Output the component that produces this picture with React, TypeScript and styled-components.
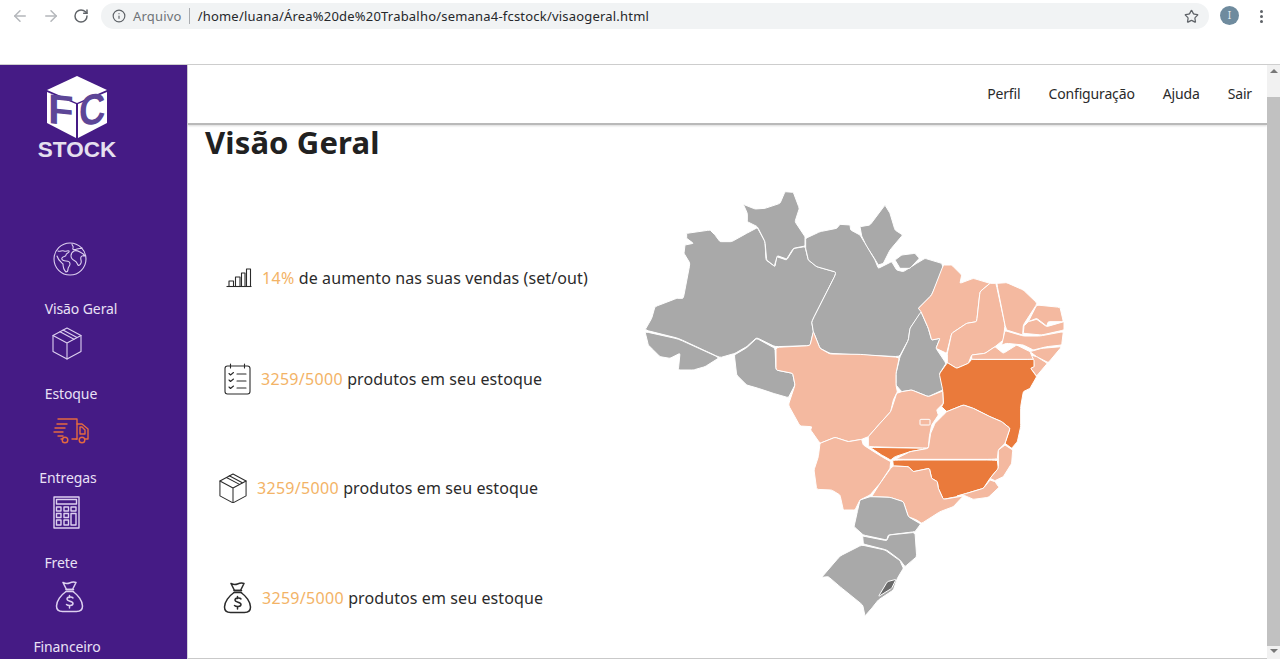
import React from 'react'
import styled, { createGlobalStyle } from 'styled-components'
import { ArrowLeft, ArrowRight, RotateCw, Info, Star } from 'lucide-react'

const GlobalStyle = createGlobalStyle`
  html, body {
    margin: 0;
    height: 659px;
    overflow: hidden;
    background: #fff;
    font-family: "Noto Sans", "Open Sans", sans-serif;
  }
`

const Page = styled.div`
  display: flex;
  flex-direction: column;
  height: 659px;
  overflow: hidden;
`

const BrowserBar = styled.header`
  box-sizing: border-box;
  flex: 0 0 65px;
  display: flex;
  align-items: flex-start;
  padding: 3px 0 0 11px;
  border-bottom: 1px solid #cfcfcf;
`

const NavIcon = styled.span<{ $faded?: boolean }>`
  display: flex;
  justify-content: center;
  align-items: center;
  width: 18px;
  height: 26px;
  margin-right: 12.5px;
  color: ${(p) => (p.$faded ? '#b4b7bb' : '#5f6368')};
`

const UrlPill = styled.div`
  flex: 0 0 1108px;
  box-sizing: border-box;
  height: 26px;
  margin-left: -1.5px;
  padding-left: 11px;
  display: flex;
  align-items: center;
  background: #f1f3f4;
  border-radius: 13px;
  color: #5f6368;
`

const Secure = styled.span`
  margin-left: 7px;
  padding-right: 7px;
  border-right: 1px solid #a8abaf;
  font-size: 13px;
  line-height: 16px;
  letter-spacing: 0.2px;
  color: #6f7378;
`

const Url = styled.span`
  flex: 1;
  margin-left: 8px;
  font-size: 13px;
  letter-spacing: 0.2px;
  color: #26282b;
`

const Avatar = styled.span`
  flex: 0 0 19px;
  height: 19px;
  margin: 3px 0 0 11px;
  border-radius: 50%;
  background: #6f8b9e;
  color: #e4ebf0;
  font-size: 10px;
  line-height: 19px;
  text-align: center;
`

const Dots = styled.span`
  display: flex;
  flex-direction: column;
  gap: 2px;
  margin: 7px 0 0 21px;
`

const Dot = styled.i`
  width: 3px;
  height: 3px;
  border-radius: 50%;
  background: #5f6368;
`

const Body = styled.div`
  flex: 1;
  display: flex;
  min-height: 0;
`

const Sidebar = styled.aside`
  flex: 0 0 187px;
  border-right: 1px solid #d6d3dc;
  background: #451b85;
  color: #e9e1f5;
`

const Logo = styled.svg`
  display: block;
  margin-left: 36px;
  width: 84px;
  height: 102px;
`

const Nav = styled.nav`
  display: grid;
  grid-auto-rows: 84.5px;
  margin-top: 75px;
`

const NavItem = styled.a<{ $labelCenter: number }>`
  display: block;
  font-size: 14px;
  line-height: 20px;
  letter-spacing: -0.1px;

  span {
    display: block;
    width: ${(p) => p.$labelCenter * 2}px;
    margin-top: 23px;
    text-align: center;
    white-space: nowrap;
  }
`

const NavGlyph = styled.div<{ $center: number; $active?: boolean }>`
  display: flex;
  justify-content: center;
  align-items: center;
  width: ${(p) => p.$center * 2}px;
  height: 34px;
  color: ${(p) => (p.$active ? '#e5693f' : '#ddd0f0')};
`

const Main = styled.main`
  flex: 1;
  display: flex;
  flex-direction: column;
  min-width: 0;
  border-bottom: 1px solid #c9c9c9;
`

const TopBar = styled.div`
  box-sizing: border-box;
  flex: 0 0 60px;
  display: flex;
  justify-content: flex-end;
  align-items: center;
  gap: 28px;
  padding: 0 15px 2px 0;
  border-bottom: 2px solid #b9b9b9;
  box-shadow: 0 1px 2px rgba(0, 0, 0, 0.15);
  font-size: 14px;
  letter-spacing: -0.15px;
  color: #2a2a2a;
`

const Title = styled.h1`
  margin: -1px 0 2px 17px;
  font-size: 31px;
  line-height: 36px;
  font-weight: 700;
  letter-spacing: 0.14px;
  color: #212121;
`

const Content = styled.section`
  display: flex;
`

const Stats = styled.div`
  flex: 0 0 452px;
`

const Stat = styled.div<{ $top: number; $indent: number }>`
  display: flex;
  align-items: center;
  gap: 10px;
  height: 34px;
  margin-top: ${(p) => p.$top}px;
  margin-left: ${(p) => p.$indent}px;
  font-size: 16px;
  letter-spacing: 0.1px;
  color: #2b2b2b;
  white-space: nowrap;
`

const Highlight = styled.b`
  font-weight: 400;
  letter-spacing: 0.3px;
  color: #f3b366;
`

const MapSvg = styled.svg`
  display: block;
  margin-top: 23px;
  width: 440px;
  height: 440px;
`

const Scrollbar = styled.div`
  flex: 0 0 13px;
  display: flex;
  flex-direction: column;
  align-items: center;
  background: #f1f1f1;
`

const Arrow = styled.i<{ $down?: boolean }>`
  flex: 0 0 auto;
  width: 0;
  height: 0;
  margin: ${(p) => (p.$down ? '3px 0 0' : '4px 0 0')};
  border-left: 4px solid transparent;
  border-right: 4px solid transparent;
  ${(p) => (p.$down ? 'border-top: 4px solid #777;' : 'border-bottom: 4px solid #777;')}
`

const Thumb = styled.div`
  width: 13px;
  height: 549px;
  margin-top: 24px;
  background: #c1c1c1;
`

const icon = { fill: 'none', stroke: 'currentColor', strokeLinejoin: 'round', strokeLinecap: 'round' } as const

const GlobeIcon = () => (
  <svg width="34" height="34" viewBox="0 0 34 34" {...icon} strokeWidth="1.1">
    <circle cx="17" cy="17" r="16" />
    <path d="M5 9c2 1 4-1 6 0s4-1 5 0c1 2-3 2-3 4s-3 1-4 3 2 3 4 3 4 1 4 3-2 3-2 5-1 3-2 3c-2-2-3-5-3-8-2-2-5-4-6-8" />
    <path d="M19 2c0 2 2 2 1 4s2 2 4 1 4 0 5-1" />
    <path d="M21 9c2-1 4 0 6 1s4 2 5 4c-2 0-3-1-4 1s1 4 0 6-2 3-3 2-1-3-3-4-4-2-4-5 1-4 3-5z" />
  </svg>
)

const BoxIcon = ({ size = 30 }: { size?: number }) => (
  <svg width={size} height={size * 1.1} viewBox="0 0 30 33" {...icon} strokeWidth="1.1">
    <path d="M15 1 29 8.5v16L15 32 1 24.500v-16z" />
    <path d="M1 8.500 15 16l14-7.500M15 16v16" />
    <path d="M8 4.800 22 12.200M11 3l14 7.500" />
  </svg>
)

const TruckIcon = () => (
  <svg width="36" height="34" viewBox="0 -3 36 34" {...icon} strokeWidth="1.4">
    <path d="M5 5h19v20H19M10 25H8" />
    <path d="M24 10h5l6 5v10h-3M24 25h-1" />
    <path d="M27 13h2l3 3v4h-5z" />
    <circle cx="12" cy="26" r="2.800" />
    <circle cx="29" cy="26" r="2.800" />
    <path d="M4 10h10M2 14h10M1 18h9M5 22h5" />
  </svg>
)

const CalculatorIcon = () => (
  <svg width="27" height="33" viewBox="0 0 27 33" {...icon} strokeWidth="1.400" strokeLinecap="butt">
    <rect x="1" y="1" width="25" height="31" />
    <rect x="3.500" y="3.500" width="20" height="4.500" />
    <path d="M3.500 11h4.500v4H3.500zM11 11h4.500v4H11zM18 11h5v4h-5zM3.500 17.500h4.500v4H3.500zM11 17.500h4.500v4H11zM3.500 24h4.500v5H3.500zM11 24h4.500v5H11zM18 17.500h5V29h-5z" />
  </svg>
)

const BagIcon = () => (
  <svg width="29" height="32" viewBox="0 0 29 32" {...icon} strokeWidth="1.500">
    <path d="M8 1.500c2 1 4 1.500 6.500.5s5-1 6.500-.5l-3.500 7h-6z" />
    <path d="M11 8.500h7.500M11 10.500h7.500" />
    <path d="M11 10.500C6 14 1.500 20 1.500 25c0 4 2 5.500 6 5.500h14c4 0 6-1.500 6-5.500 0-5-4.500-11-9.500-14.500" />
    <path d="M18 17c-1-1.500-6-1.500-6 1s6 2 6 4.500-5 2.500-6.500 1M14.500 14.500v2M14.500 25v2" />
  </svg>
)

const ChartIcon = () => (
  <svg width="26" height="20" viewBox="0 0 26 20" {...icon} strokeWidth="1.100" strokeLinecap="butt">
    <path d="M0.500 18.500h25" />
    <path d="M3 18v-5h4.500v5M9.500 18V9H14v9M15.500 18V5H19v13M20.500 18V1H24.500v17" />
  </svg>
)

const ChecklistIcon = () => (
  <svg width="27" height="32" viewBox="0 0 27 32" {...icon} strokeWidth="1.100">
    <rect x="1" y="3" width="25" height="28" rx="2.500" />
    <path d="M6.500 1v4M20.500 1v4" />
    <path d="M5 10.500l1.500 1.500 3-2.500M5 17l1.500 1.500 3-2.500M5 24l1.500 1.500 3-2.500" />
    <path d="M13 11h9M13 18h9M13 25h9" />
  </svg>
)

const GREY = '#a9a9a9'
const LIGHT = '#f4b9a0'
const DARK = '#ea7a3b'

// traced by hand, 3 units = 1px on the page
const states: { fill: string; points: string }[] = [
  { fill: GREY, points: '140,145 210,135 225,150 240,170 275,170 320,145 352,128 375,170 378,225 405,245 410,215 440,225 462,190 495,185 505,225 530,245 590,262 515,410 520,440 510,482 405,485 350,458 320,485 285,505 240,518 115,460 15,435 35,400 45,365 110,340 130,340 150,235 132,205 135,180 160,175 140,160' },
  { fill: GREY, points: '15,440 115,462 238,518 195,545 160,555 115,555 120,505 90,520 60,515 40,495 25,480' },
  { fill: GREY, points: '350,460 405,490 408,555 458,565 465,600 445,638 400,625 355,610 320,600 290,570 283,510 320,488' },
  { fill: GREY, points: '310,58 345,72 375,70 420,55 435,20 460,22 478,70 465,110 495,155 495,183 460,190 440,222 412,212 403,243 380,225 375,170 352,125 322,110 322,85' },
  { fill: GREY, points: '735,60 750,85 765,135 788,150 750,195 730,235 715,240 700,215 680,185 665,153 660,125 690,120' },
  { fill: GREY, points: '497,160 540,140 590,130 600,118 630,120 632,135 660,150 675,175 705,225 715,250 755,230 770,255 790,260 830,235 855,220 905,235 910,250 875,330 835,370 845,380 810,430 805,465 778,515 660,510 570,505 540,490 520,440 515,410 590,262 530,245 505,225 497,190' },
  { fill: GREY, points: '765,225 785,210 825,205 838,220 810,250 780,250' },
  { fill: GREY, points: '843,380 865,430 875,465 900,460 888,490 918,535 898,567 910,580 908,615 865,635 815,615 785,620 768,600 768,565 780,515 805,465 810,430' },
  { fill: LIGHT, points: '910,240 935,240 965,270 960,295 1000,280 1050,295 1020,320 1010,410 980,415 935,445 920,505 888,490 900,460 875,465 865,430 843,380 835,370 875,330' },
  { fill: LIGHT, points: '1050,295 1068,295 1095,420 1090,465 1065,485 1035,505 995,510 985,535 950,550 922,533 922,505 935,445 980,415 1010,410 1020,320' },
  { fill: LIGHT, points: '1070,295 1100,293 1150,315 1192,355 1150,420 1148,450 1100,435 1095,420' },
  { fill: LIGHT, points: '1190,360 1260,367 1270,410 1225,410 1220,423 1190,400 1165,410' },
  { fill: LIGHT, points: '1152,423 1165,410 1190,403 1220,425 1272,410 1272,435 1205,450 1150,445' },
  { fill: LIGHT, points: '1095,437 1150,453 1200,453 1270,440 1265,480 1220,485 1180,495 1150,480 1100,475 1085,480' },
  { fill: LIGHT, points: '1170,500 1205,490 1265,485 1225,533 1190,515' },
  { fill: LIGHT, points: '1172,510 1190,515 1222,535 1190,573 1172,550 1182,545 1180,523' },
  { fill: DARK, points: '1000,523 1182,523 1182,545 1172,550 1190,575 1170,610 1150,620 1142,665 1142,725 1132,770 1115,790 1095,775 1110,730 1085,710 1050,695 1000,670 970,660 920,680 905,665 910,655 908,615 898,567 922,533 950,550 985,535 995,523' },
  { fill: LIGHT, points: '995,523 995,510 1035,505 1065,485 1090,505 1130,480 1170,500 1180,523' },
  { fill: LIGHT, points: '408,487 510,482 520,440 540,490 570,507 660,508 778,517 768,565 768,600 772,620 760,645 752,680 720,715 685,755 665,763 625,770 585,757 540,775 512,735 515,725 480,723 445,660 465,600 458,565 408,555' },
  { fill: LIGHT, points: '685,755 720,715 752,680 770,625 785,620 815,615 865,635 908,618 910,655 890,675 895,690 875,720 868,755 865,790 685,785' },
  { fill: DARK, points: '690,787 865,790 810,800 765,815 752,825 725,810' },
  { fill: LIGHT, points: '840,703 870,703 870,720 840,720' },
  { fill: LIGHT, points: '765,823 810,800 865,790 872,745 885,715 910,690 920,680 970,660 1000,670 1050,695 1085,710 1110,730 1095,775 1075,795 1072,823' },
  { fill: DARK, points: '758,825 1072,825 1075,850 1050,880 1030,910 980,925 950,935 910,943 895,910 892,890 875,880 868,850 820,860 805,845 760,843' },
  { fill: LIGHT, points: '1075,795 1095,780 1118,795 1115,835 1090,875 1065,887 1050,880 1075,850' },
  { fill: LIGHT, points: '1050,885 1065,890 1077,907 1045,937 1000,943 970,930 950,933 980,925 1030,910' },
  { fill: LIGHT, points: '760,843 805,845 820,860 868,850 875,880 892,890 895,910 910,943 970,933 940,965 900,980 845,1015 830,1005 805,995 790,950 750,937 695,935 720,895 752,850' },
  { fill: LIGHT, points: '540,775 585,757 625,770 665,763 670,780 725,815 752,830 750,850 720,895 690,930 660,945 645,975 610,975 600,930 575,915 530,913 522,855 535,815' },
  { fill: GREY, points: '690,935 750,937 790,950 805,995 842,1017 825,1040 745,1050 740,1065 670,1050 642,1025 652,980 660,945' },
  { fill: GREY, points: '668,1053 740,1067 748,1050 825,1042 830,1115 795,1145 780,1125 740,1095 670,1077' },
  { fill: GREY, points: '665,1080 735,1095 780,1127 790,1150 772,1180 760,1215 715,1245 695,1270 675,1293 668,1260 600,1205 565,1175 545,1177 600,1113' },
  { fill: '#6a6a6a', points: '742,1190 768,1183 755,1210 715,1235' },
]

// softens the traced corners a little so the borders read less angular
const softPath = (points: string) => {
  const pts = points.split(' ').map((p) => p.split(',').map(Number))
  const cut = (a: number[], b: number[], t: number) => `${a[0] + (b[0] - a[0]) * t},${a[1] + (b[1] - a[1]) * t}`
  return (
    pts
      .map((p, i) => {
        const prev = pts[(i - 1 + pts.length) % pts.length]
        const next = pts[(i + 1) % pts.length]
        return `${i === 0 ? 'M' : 'L'}${cut(p, prev, 0.1)}Q${p[0]},${p[1]} ${cut(p, next, 0.1)}`
      })
      .join('') + 'Z'
  )
}

const BrazilMap = () => (
  <MapSvg viewBox="0 0 1320 1320">
    {states.map((s) => (
      <path key={s.points} d={softPath(s.points)} fill={s.fill} stroke="#fff" strokeWidth="3" strokeLinejoin="round" />
    ))}
  </MapSvg>
)

const LogoMark = () => (
  <Logo viewBox="0 0 84 102">
    <path d="M41 11 71 25 41 38 11 25z" fill="#fff" />
    <path d="M11 27 40 39V73L11 58z" fill="#fff" />
    <path d="M71 27 42 39V73L71 58z" fill="#fff" />
    <text x="0" y="0" transform="translate(12 58) skewY(6)" fontFamily="Liberation Sans" fontWeight="700" fontSize="42" fill="#5d4697">F</text>
    <text x="0" y="0" transform="translate(43 62) skewY(-12) scale(0.85 1)" fontFamily="Liberation Sans" fontWeight="700" fontSize="43" fill="#5d4697">C</text>
    <text x="41" y="92" textAnchor="middle" fontFamily="Liberation Sans" fontWeight="700" fontSize="22.500" fill="#e6e0ef">STOCK</text>
  </Logo>
)

const links = [
  { label: 'Visão Geral', center: 70, labelCenter: 81, glyph: <GlobeIcon /> },
  { label: 'Estoque', center: 67, labelCenter: 71, glyph: <BoxIcon /> },
  { label: 'Entregas', center: 71, labelCenter: 68, glyph: <TruckIcon />, active: true },
  { label: 'Frete', center: 66, labelCenter: 61, glyph: <CalculatorIcon /> },
  { label: 'Financeiro', center: 69, labelCenter: 67, glyph: <BagIcon /> },
]

export default function App() {
  return (
    <Page>
      <GlobalStyle />
      <BrowserBar>
        <NavIcon $faded>
          <ArrowLeft size={18} />
        </NavIcon>
        <NavIcon $faded>
          <ArrowRight size={18} />
        </NavIcon>
        <NavIcon>
          <RotateCw size={16} strokeWidth={2.200} />
        </NavIcon>
        <UrlPill>
          <Info size={14} />
          <Secure>Arquivo</Secure>
          <Url>/home/luana/Área%20de%20Trabalho/semana4-fcstock/visaogeral.html</Url>
          <Star size={15} color="#5f6368" style={{ marginRight: 10 }} />
        </UrlPill>
        <Avatar>I</Avatar>
        <Dots>
          <Dot />
          <Dot />
          <Dot />
        </Dots>
      </BrowserBar>
      <Body>
        <Sidebar>
          <LogoMark />
          <Nav>
            {links.map((l) => (
              <NavItem key={l.label} $labelCenter={l.labelCenter}>
                <NavGlyph $center={l.center} $active={l.active}>
                  {l.glyph}
                </NavGlyph>
                <span>{l.label}</span>
              </NavItem>
            ))}
          </Nav>
        </Sidebar>
        <Main>
          <TopBar>
            <span>Perfil</span>
            <span>Configuração</span>
            <span>Ajuda</span>
            <span>Sair</span>
          </TopBar>
          <Title>Visão Geral</Title>
          <Content>
            <Stats>
              <Stat $top={99} $indent={38}>
                <ChartIcon />
                <span>
                  <Highlight>14%</Highlight> de aumento nas suas vendas (set/out)
                </span>
              </Stat>
              <Stat $top={67} $indent={36}>
                <ChecklistIcon />
                <span>
                  <Highlight>3259/5000</Highlight> produtos em seu estoque
                </span>
              </Stat>
              <Stat $top={75} $indent={31}>
                <BoxIcon size={28} />
                <span>
                  <Highlight>3259/5000</Highlight> produtos em seu estoque
                </span>
              </Stat>
              <Stat $top={76} $indent={35}>
                <BagIcon />
                <span>
                  <Highlight>3259/5000</Highlight> produtos em seu estoque
                </span>
              </Stat>
            </Stats>
            <BrazilMap />
          </Content>
        </Main>
        <Scrollbar>
          <Arrow />
          <Thumb />
          <Arrow $down />
        </Scrollbar>
      </Body>
    </Page>
  )
}
